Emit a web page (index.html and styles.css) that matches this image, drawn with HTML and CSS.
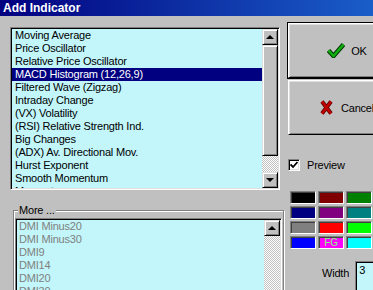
FILE: index.html
```html
<!DOCTYPE html>
<html lang="en">

<head>
    <meta charset="UTF-8">
    <meta name="viewport" content="width=device-width, initial-scale=1.0">
    <title>Add Indicator</title>
    <link rel="stylesheet" href="styles.css">
</head>

<body>
    <div class="titlebar">Add Indicator</div>

    <div class="main">
        <div class="left">
            <div class="listbox top-list">
                <ul class="items">
                    <li>Moving Average</li>
                    <li>Price Oscillator</li>
                    <li>Relative Price Oscillator</li>
                    <li class="selected">MACD Histogram (12,26,9)</li>
                    <li>Filtered Wave (Zigzag)</li>
                    <li>Intraday Change</li>
                    <li>(VX) Volatility</li>
                    <li>(RSI) Relative Strength Ind.</li>
                    <li>Big Changes</li>
                    <li>(ADX) Av. Directional Mov.</li>
                    <li>Hurst Exponent</li>
                    <li>Smooth Momentum</li>
                    <li>Momentum</li>
                </ul>
                <div class="scrollbar">
                    <div class="sb-btn"><span class="arrow-up"></span></div>
                    <div class="sb-thumb"></div>
                    <div class="sb-track"></div>
                    <div class="sb-btn"><span class="arrow-down"></span></div>
                </div>
            </div>

            <fieldset class="more">
                <legend>More ...</legend>
                <div class="listbox more-list">
                    <ul class="items muted">
                        <li>DMI Minus20</li>
                        <li>DMI Minus30</li>
                        <li>DMI9</li>
                        <li>DMI14</li>
                        <li>DMI20</li>
                        <li>DMI30</li>
                    </ul>
                    <div class="scrollbar">
                        <div class="sb-btn"><span class="arrow-up"></span></div>
                        <div class="sb-track"></div>
                    </div>
                </div>
            </fieldset>
        </div>

        <div class="right">
            <button class="btn default">
                <svg width="18" height="15" viewBox="0 0 18 15">
                    <path d="M1.5 7.5 L6.5 13 L16.5 1.5" fill="none" stroke="#003800" stroke-width="4.5" stroke-linejoin="round" />
                    <path d="M1.5 7.5 L6.5 13 L16.5 1.5" fill="none" stroke="#10b010" stroke-width="2.6" stroke-linejoin="round" />
                </svg>
                <span>OK</span>
            </button>
            <button class="btn cancel">
                <svg width="13" height="15" viewBox="0 0 13 15">
                    <path d="M2 1.5 L11 13.5 M11 1.5 L2 13.5" fill="none" stroke="#600000" stroke-width="4" />
                    <path d="M2 1.5 L11 13.5 M11 1.5 L2 13.5" fill="none" stroke="#c00000" stroke-width="2.4" />
                </svg>
                <span>Cancel</span>
            </button>

            <label class="preview">
                <span class="checkbox">
                    <svg width="8" height="8" viewBox="0 0 8 8">
                        <path d="M0.5 3.5 L3 6 L7.5 1" fill="none" stroke="#000" stroke-width="1.8" />
                    </svg>
                </span>
                Preview
            </label>

            <div class="swatches">
                <div class="swatch" style="background:#000000"></div>
                <div class="swatch" style="background:#800000"></div>
                <div class="swatch" style="background:#008000"></div>
                <div class="swatch" style="background:#000080"></div>
                <div class="swatch" style="background:#800080"></div>
                <div class="swatch" style="background:#008080"></div>
                <div class="swatch" style="background:#808080"></div>
                <div class="swatch" style="background:#ff0000"></div>
                <div class="swatch" style="background:#00ff00"></div>
                <div class="swatch" style="background:#0000ff"></div>
                <div class="swatch fg" style="background:#ff00ff">FG</div>
                <div class="swatch" style="background:#00ffff"></div>
            </div>

            <div class="width-row">
                <span class="width-label">Width</span>
                <div class="width-input">3</div>
            </div>
        </div>
    </div>
</body>

</html>
```

FILE: styles.css
```css
body {
    margin: 0;
    width: 373px;
    height: 290px;
    overflow: hidden;
    background-color: #c0c0c0;
    font-family: "Liberation Sans", Arial, sans-serif;
    font-size: 11px;
    letter-spacing: -0.2px;
    color: #000;
}

.titlebar {
    height: 16px;
    line-height: 16px;
    padding-left: 3px;
    background: linear-gradient(90deg, #000080, #1a5ec8);
    color: #fff;
    font-weight: bold;
    font-size: 12px;
    letter-spacing: 0;
}

.main {
    display: flex;
    padding-top: 6px;
}

.left {
    flex: none;
    width: 274px;
    margin-left: 10px;
    margin-top: 5px;
}

.right {
    flex: none;
    width: 118px;
    margin-left: 4px;
    display: flex;
    flex-direction: column;
}

/* sunken list boxes */
.listbox {
    display: flex;
    box-sizing: border-box;
    padding: 1px;
    border: 1px solid;
    border-color: #808080 #fff #fff #808080;
    box-shadow: inset 1px 1px #000, inset -1px -1px #dfdfdf;
    background-color: #c2f6fa;
}

.top-list {
    width: 270px;
    height: 163px;
}

.items {
    flex: 1;
    list-style: none;
    margin: 0;
    padding: 0;
    overflow: hidden;
}

.items li {
    height: 13px;
    line-height: 13px;
    padding-left: 3px;
    white-space: nowrap;
}

.items .selected {
    background-color: #000080;
    color: #fff;
}

.items.muted li {
    color: #808080;
    padding-left: 2px;
}

.scrollbar {
    flex: none;
    width: 16px;
    display: flex;
    flex-direction: column;
}

.sb-btn,
.sb-thumb {
    box-sizing: border-box;
    background-color: #c0c0c0;
    border: 1px solid;
    border-color: #dfdfdf #000 #000 #dfdfdf;
    box-shadow: inset 1px 1px #fff, inset -1px -1px #808080;
}

.sb-btn {
    height: 16px;
    display: flex;
    align-items: center;
    justify-content: center;
}

.sb-thumb {
    height: 111px;
}

.sb-track {
    flex: 1;
    background: repeating-conic-gradient(#fff 0 25%, #c0c0c0 0 50%) 0 0 / 2px 2px;
}

.arrow-up,
.arrow-down {
    width: 0;
    height: 0;
    border-left: 4px solid transparent;
    border-right: 4px solid transparent;
}

.arrow-up {
    border-bottom: 4px solid #000;
}

.arrow-down {
    border-top: 4px solid #000;
}

/* More ... group */
.more {
    margin: 14px 0 0 3px;
    width: 271px;
    box-sizing: border-box;
    padding: 1px 1px 0 1px;
    border: 1px solid #808080;
    box-shadow: inset 1px 1px #fff, 1px 1px #fff;
}

.more legend {
    margin-left: 3px;
    padding: 0 1px;
    line-height: 13px;
    background-color: #c0c0c0;
}

.more-list {
    width: 267px;
    height: 90px;
}

/* buttons */
.btn {
    width: 118px;
    height: 55px;
    padding: 0;
    display: flex;
    align-items: center;
    justify-content: center;
    gap: 6px;
    font: inherit;
    letter-spacing: inherit;
    background-color: #c0c0c0;
    border: 1px solid;
    border-color: #fff #000 #000 #fff;
    box-shadow: inset 1px 1px #dfdfdf, inset -1px -1px #808080;
}

.btn.default {
    margin-top: 1px;
    outline: 1px solid #000;
}

.btn.cancel {
    margin-top: 2px;
    gap: 8px;
}

.btn svg {
    display: block;
}

.preview {
    margin-top: 24px;
    display: flex;
    align-items: center;
    gap: 7px;
}

.checkbox {
    width: 12px;
    height: 12px;
    box-sizing: border-box;
    display: flex;
    align-items: center;
    justify-content: center;
    background-color: #fff;
    border: 1px solid;
    border-color: #808080 #fff #fff #808080;
    box-shadow: inset 1px 1px #000, inset -1px -1px #dfdfdf;
}

.swatches {
    margin: 20px 0 0 2px;
    display: grid;
    grid-template-columns: repeat(3, 26px);
    grid-auto-rows: 13px;
    gap: 2px;
}

.swatch {
    box-sizing: border-box;
    border: 1px solid;
    border-color: #808080 #fff #fff #808080;
    box-shadow: inset 1px 1px #404040;
}

.swatch.fg {
    color: #80ff80;
    font-size: 10px;
    line-height: 11px;
    text-align: center;
}

.width-row {
    margin-top: 12px;
    padding-left: 34px;
    display: flex;
    align-items: flex-start;
    gap: 6px;
}

.width-label {
    margin-top: 6px;
}

.width-input {
    width: 30px;
    height: 32px;
    box-sizing: border-box;
    padding: 2px 3px;
    background-color: #c2f6fa;
    border: 1px solid;
    border-color: #808080 #fff #fff #808080;
    box-shadow: inset 1px 1px #000;
}
```
